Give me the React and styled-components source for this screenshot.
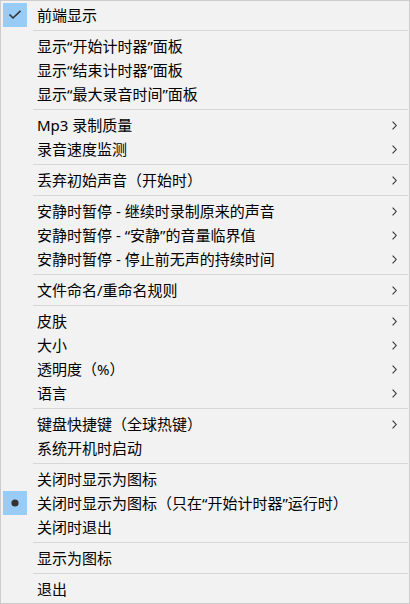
import React from 'react';
import styled, { createGlobalStyle } from 'styled-components';

const GlobalStyle = createGlobalStyle`
  html, body {
    margin: 0;
    padding: 0;
    background: #f2f2f2;
  }
`;

const Menu = styled.div`
  box-sizing: border-box;
  width: 410px;
  height: 604px;
  padding: 2px;
  background: #f2f2f2;
  border: 1px solid #cccccc;
  font-family: "Noto Sans", "Noto Sans CJK SC", sans-serif;
  font-size: 15px;
  color: #000;
`;

const Row = styled.div`
  display: flex;
  align-items: center;
  height: 24px;
`;

const Gutter = styled.div`
  display: flex;
  align-items: center;
  justify-content: center;
  width: 24px;
  height: 24px;
  flex: none;
  background: ${(p) => (p.$marked ? '#99cbf7' : 'transparent')};
`;

const Label = styled.span`
  flex: 1;
  margin-left: 10px;
  line-height: 24px;
  white-space: nowrap;
`;

const Arrow = styled.svg`
  flex: none;
  width: 5px;
  height: 9px;
  margin-right: 10px;
`;

const Separator = styled.div`
  height: 1px;
  margin: 3px -1px 3px 30px;
  background: #d7d7d7;
`;

const CheckIcon = () => (
  <svg width="14" height="10" viewBox="0 0 14 10">
    <path d="M1.5 4.5 L5 8 L12.5 0.8" fill="none" stroke="#333" strokeWidth="1.6" />
  </svg>
);

const Bullet = () => (
  <svg width="8" height="8" viewBox="0 0 8 8">
    <circle cx="4" cy="4" r="3.6" fill="#333" />
  </svg>
);

const groups = [
  [{ text: '前端显示', mark: 'check' }],
  [
    { text: '显示“开始计时器”面板' },
    { text: '显示“结束计时器”面板' },
    { text: '显示“最大录音时间”面板' },
  ],
  [
    { text: 'Mp3 录制质量', sub: true },
    { text: '录音速度监测', sub: true },
  ],
  [{ text: '丢弃初始声音（开始时）', sub: true }],
  [
    { text: '安静时暂停 - 继续时录制原来的声音', sub: true },
    { text: '安静时暂停 - “安静”的音量临界值', sub: true },
    { text: '安静时暂停 - 停止前无声的持续时间', sub: true },
  ],
  [{ text: '文件命名/重命名规则', sub: true }],
  [
    { text: '皮肤', sub: true },
    { text: '大小', sub: true },
    { text: '透明度（%）', sub: true },
    { text: '语言', sub: true },
  ],
  [
    { text: '键盘快捷键（全球热键）', sub: true },
    { text: '系统开机时启动' },
  ],
  [
    { text: '关闭时显示为图标' },
    { text: '关闭时显示为图标（只在“开始计时器”运行时）', mark: 'radio' },
    { text: '关闭时退出' },
  ],
  [{ text: '显示为图标' }],
  [{ text: '退出' }],
];

const MenuItem = ({ text, mark, sub }) => (
  <Row>
    <Gutter $marked={!!mark}>
      {mark === 'check' && <CheckIcon />}
      {mark === 'radio' && <Bullet />}
    </Gutter>
    <Label>{text}</Label>
    {sub && (
      <Arrow viewBox="0 0 5 9">
        <path d="M0.6 0.6 L4.2 4.5 L0.6 8.4" fill="none" stroke="#333" strokeWidth="1.1" />
      </Arrow>
    )}
  </Row>
);

export default function App() {
  return (
    <>
      <GlobalStyle />
      <Menu>
        {groups.map((items, gi) => (
          <React.Fragment key={gi}>
            {gi > 0 && <Separator />}
            {items.map((item) => (
              <MenuItem key={item.text} {...item} />
            ))}
          </React.Fragment>
        ))}
      </Menu>
    </>
  );
}
